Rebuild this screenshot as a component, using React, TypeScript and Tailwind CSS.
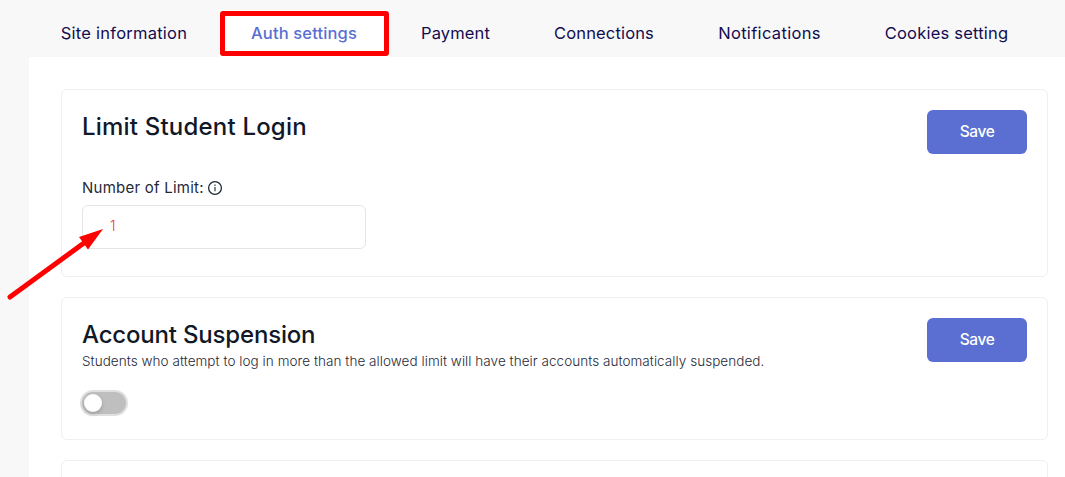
const tabs = [
  { label: 'Site information', box: 'w-[190px]', text: 'tracking-[0.24px]' },
  { label: 'Auth settings', box: 'w-[170px]', text: 'tracking-[0.15px]', active: true },
  { label: 'Payment', box: 'w-[133px]', text: 'tracking-[0.15px]' },
  { label: 'Connections', box: 'w-[164px]', text: 'tracking-[0.15px]' },
  { label: 'Notifications', box: 'w-[167px]', text: 'tracking-[0.33px]' },
  { label: 'Cookies setting', box: 'w-[187px]', text: 'tracking-[0.2px]' },
]

function SaveButton() {
  return (
    <button className="h-11 w-[100px] shrink-0 rounded-md bg-[#5a6fd1] text-[15.5px] leading-6 font-medium tracking-[-0.4px] text-white">
      Save
    </button>
  )
}

export default function App() {
  return (
    <div className="relative h-[477px] w-[1065px] overflow-hidden bg-[#f8f8f8] pl-[29px] font-['Inter',sans-serif]">
      {/* Tabs */}
      <nav className="flex h-[57px] items-center pt-2.5 text-[16.5px]">
        {tabs.map((tab) => (
          <a
            key={tab.label}
            className={`flex h-full shrink-0 items-center justify-center whitespace-nowrap ${tab.box} ${tab.text} ${
              tab.active ? 'bg-white font-medium text-[#5a6fd1]' : 'text-[#120c50]'
            }`}
          >
            {tab.label}
          </a>
        ))}
      </nav>

      <main className="flex h-[420px] flex-col gap-5 overflow-hidden bg-white pt-8 pr-[17px] pl-8">
        <section className="flex h-[188px] shrink-0 items-start justify-between rounded-md border border-[#efeff1] p-5">
          <div>
            <h2 className="pt-px text-2xl leading-8 font-medium tracking-[0.2px] text-[#111827]">Limit Student Login</h2>
            <label className="mt-[33px] flex items-center gap-[3px] text-[15px] leading-6 tracking-[0.24px] text-[#1f2937]">
              <span>Number of Limit:</span>
              <svg className="size-4" viewBox="0 0 16 16" fill="none" stroke="currentColor" strokeWidth="1.3">
                <circle cx="8" cy="8" r="6.4" />
                <path d="M8 7v4.200M8 4.600v1.300" strokeWidth="1.1" />
              </svg>
            </label>
            <div className="mt-[5px] flex h-11 w-[284px] items-center rounded-md border border-[#e5e5e7] pr-4 pb-[3px] pl-[27px] text-sm font-light text-[#f4333c]">
              1
            </div>
          </div>
          <SaveButton />
        </section>

        <section className="flex h-[143px] shrink-0 items-start justify-between rounded-md border border-[#efeff1] p-5">
          <div>
            <h2 className="pt-px text-2xl leading-8 font-medium tracking-[-0.18px] text-[#111827]">Account Suspension</h2>
            <p className="-mt-0.5 text-[13.5px] leading-6 font-light tracking-[0.05px] text-[#1f2937]">
              Students who attempt to log in more than the allowed limit will have their accounts automatically suspended.
            </p>
            <div className="mt-[19px] flex h-[22px] w-11 items-center rounded-full bg-[#bfbfbf] px-0.5 ring-2 ring-[#e0e0e0]">
              <span className="size-[18px] rounded-full bg-white shadow-[0_2px_4px_rgba(0,35,11,0.2)]" />
            </div>
          </div>
          <SaveButton />
        </section>

        <section className="h-[143px] shrink-0 rounded-md border border-[#efeff1]" />
      </main>

      {/* Highlight box and arrow over the page */}
      <div className="absolute top-[11px] left-[220px] h-[45px] w-[169px] rounded-[3px] border-[5px] border-[#ff0000]" />
      <svg className="absolute top-[220px] left-0 h-[85px] w-[110px]" viewBox="0 220 110 85">
        <path d="M10 297 86 241.500" stroke="#ff0000" strokeWidth="5" strokeLinecap="round" />
        <path d="M103 229 79 237 88 249.500z" fill="#ff0000" />
      </svg>
    </div>
  )
}
